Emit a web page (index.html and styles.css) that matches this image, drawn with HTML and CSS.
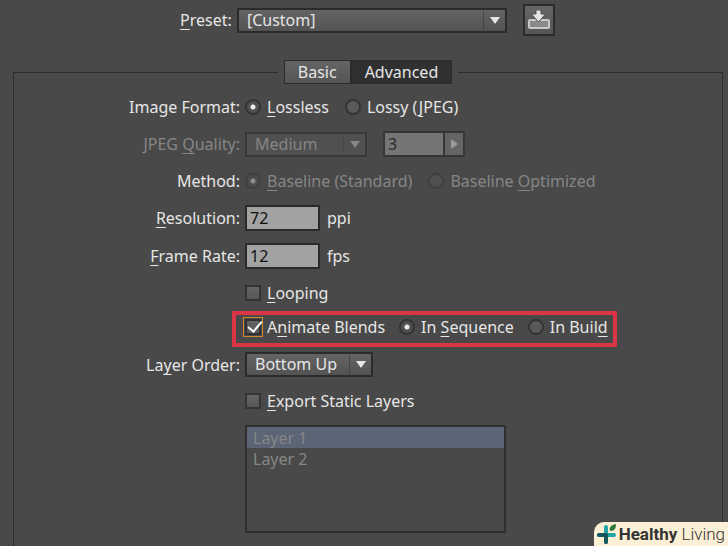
FILE: index.html
```
<!DOCTYPE html>
<html lang="en">
<head>
<meta charset="UTF-8">
<meta name="viewport" content="width=device-width, initial-scale=1.0">
<title>SWF Options</title>
<link rel="stylesheet" href="styles.css">
</head>
<body>
    <div class="preset">
        <label for="preset"><u>P</u>reset:</label>
        <div class="dropdown preset-dropdown">
            <select id="preset"><option>[Custom]</option></select>
        </div>
        <button class="save-button" type="button" aria-label="Save preset">
            <svg width="22" height="20" viewBox="0 0 22 20">
                <rect x="1" y="10" width="20" height="8" rx="1" fill="#8b8b8b" stroke="#c8c8c8" stroke-width="2"/>
                <path d="M8 0h5v4h4.500L10.500 12 3.500 4H8z" fill="#e4e4e4" stroke="#4c4c4c" stroke-width="1"/>
            </svg>
        </button>
    </div>

    <fieldset class="panel">
        <legend>
            <div class="tabs">
                <button class="tab" type="button">Basic</button>
                <button class="tab active" type="button">Advanced</button>
            </div>
        </legend>

        <form class="options">
            <span class="name">Image Format:</span>
            <div class="field">
                <label class="choice"><input type="radio" name="format" checked><span><u>L</u>ossless</span></label>
                <label class="choice"><input type="radio" name="format"><span>Lossy (<u>J</u>PEG)</span></label>
            </div>

            <label class="name off" for="quality">JPEG <u>Q</u>uality:</label>
            <div class="field">
                <div class="dropdown quality-dropdown off">
                    <select id="quality" disabled><option>Medium</option></select>
                </div>
                <div class="stepper">
                    <input type="text" value="3" aria-label="Quality value" disabled>
                    <button type="button" aria-label="Show slider" disabled></button>
                </div>
            </div>

            <span class="name">Method:</span>
            <div class="field">
                <label class="choice off"><input type="radio" name="method" checked disabled><span><u>B</u>aseline (Standard)</span></label>
                <label class="choice off"><input type="radio" name="method" disabled><span>Baseline <u>O</u>ptimized</span></label>
            </div>

            <label class="name" for="resolution"><u>R</u>esolution:</label>
            <div class="field unit">
                <input type="text" id="resolution" value="72">
                <span>ppi</span>
            </div>

            <label class="name" for="rate"><u>F</u>rame Rate:</label>
            <div class="field unit">
                <input type="text" id="rate" value="12">
                <span>fps</span>
            </div>

            <div class="field">
                <label class="choice"><input type="checkbox"><span><u>L</u>ooping</span></label>
            </div>

            <div class="field highlight">
                <label class="choice"><input type="checkbox" class="focused" checked><span>A<u>n</u>imate Blends</span></label>
                <label class="choice"><input type="radio" name="blend" checked><span>In <u>S</u>equence</span></label>
                <label class="choice"><input type="radio" name="blend"><span>In Buil<u>d</u></span></label>
            </div>

            <label class="name" for="order">La<u>y</u>er Order:</label>
            <div class="field">
                <div class="dropdown order-dropdown">
                    <select id="order"><option>Bottom Up</option></select>
                </div>
            </div>

            <div class="field">
                <label class="choice"><input type="checkbox"><span><u>E</u>xport Static Layers</span></label>
            </div>

            <select class="layers" size="5" aria-label="Layers" disabled>
                <option selected>Layer 1</option>
                <option>Layer 2</option>
            </select>
        </form>
    </fieldset>

    <div class="brand">
        <svg width="20" height="20" viewBox="0 0 20 20">
            <path d="M9 3v15M2 11h15" stroke="#24a3a8" stroke-width="4" stroke-linecap="round"/>
            <path d="M9 11v7M2 11h7" stroke="#17565c" stroke-width="4" stroke-linecap="round"/>
            <path d="M13 7c-1-4 1-6 6-7 0 4-1 7-6 7z" fill="#2c7a37"/>
        </svg>
        <span><b>Healthy</b> Living</span>
    </div>
</body>
</html>
```

FILE: styles.css
```
* {
    box-sizing: border-box;
}

body {
    margin: 0;
    height: 100vh;
    display: flex;
    flex-direction: column;
    overflow: hidden;
    background-color: #494949;
    color: #e6e6e6;
    font-family: "Noto Sans", sans-serif;
    font-size: 16px;
    line-height: 24px;
}

button, input, select {
    margin: 0;
    padding: 0;
    font: inherit;
    color: inherit;
    border: 1px solid #2b2b2b;
    border-radius: 0;
    appearance: none;
}

u {
    text-decoration-thickness: 1px;
    text-underline-offset: 3px;
    text-decoration-skip-ink: none;
}

.preset {
    display: flex;
    justify-content: center;
    align-items: center;
    gap: 5px;
    padding: 4px 0 0 7px;
}

.save-button {
    display: flex;
    justify-content: center;
    align-items: center;
    width: 32px;
    height: 32px;
    margin-left: 11px;
    border-width: 2px;
    background: linear-gradient(#666, #555);
}

/* dropdowns */
.dropdown {
    position: relative;
}

.dropdown select {
    display: block;
    width: 100%;
    height: 25px;
    padding: 0 28px 2px 8px;
    border-width: 2px;
    line-height: 20px;
    background: linear-gradient(#646464, #535353);
    opacity: 1;
}

.dropdown::before {
    content: "";
    position: absolute;
    top: 3px;
    bottom: 3px;
    right: 23px;
    border-left: 1px solid #454545;
}

.dropdown::after {
    content: "";
    position: absolute;
    top: 9px;
    right: 7px;
    border: 5px solid transparent;
    border-top: 7px solid #e6e6e6;
    border-bottom: 0;
}

.preset-dropdown {
    width: 270px;
}

.quality-dropdown {
    width: 122px;
}

.order-dropdown {
    width: 128px;
}

.off {
    color: #868686;
}

.dropdown.off select {
    background: #505050;
    border-color: #383838;
}

.dropdown.off::after {
    border-top-color: #868686;
}

/* panel */
.panel {
    flex: 1;
    min-width: 0;
    margin: 24px 5px 0 13px;
    padding: 0;
    border: 1px solid #2e2e2e;
    border-bottom: 0;
}

.panel legend {
    margin: 0 auto;
    padding: 0 6px;
}

.tabs {
    display: flex;
}

.tab {
    height: 24px;
    padding: 0 13px;
    line-height: 20px;
    background: linear-gradient(#646464, #555);
}

.tab.active {
    background: #303030;
}

.options {
    display: grid;
    grid-template-columns: 226px 1fr;
    gap: 12px 5px;
    padding-top: 11px;
}

.name {
    align-self: center;
    text-align: right;
}

.field {
    grid-column: 2;
    display: flex;
    align-items: center;
    gap: 16px;
}

.unit {
    gap: 7px;
}

.choice {
    display: flex;
    align-items: center;
    gap: 6px;
}

input[type="text"] {
    width: 75px;
    height: 26px;
    padding: 0 3px;
    border-width: 2px;
    background-color: #a2a2a2;
    color: #111;
}

input[type="radio"],
input[type="checkbox"] {
    flex: none;
    width: 16px;
    height: 16px;
    border: 2px solid #343434;
    background: linear-gradient(#646464, #585858);
}

input[type="radio"] {
    border-radius: 50%;
    background: #5a5a5a;
}

input[type="radio"]:checked {
    background: radial-gradient(circle, #eee 2px, #505050 3px);
}

input[type="radio"]:disabled {
    border-color: #404040;
    background: #505050;
}

input[type="radio"]:disabled:checked {
    background: radial-gradient(circle, #8c8c8c 2px, #4c4c4c 3px);
}

input[type="checkbox"].focused {
    position: relative;
    outline: 1px solid #d08a2c;
    outline-offset: 1px;
    border-color: #303030;
}

.focused:checked::after {
    content: "";
    position: absolute;
    left: 4px;
    top: -3px;
    width: 6px;
    height: 12px;
    border: solid #fff;
    border-width: 0 2px 2px 0;
    transform: rotate(40deg);
}

.stepper {
    display: flex;
}

.stepper input[type="text"] {
    width: 62px;
    border-color: #363636;
    background-color: #757575;
    color: #2b2b2b;
}

.stepper button {
    display: flex;
    justify-content: center;
    align-items: center;
    width: 20px;
    border: 2px solid #363636;
    border-left: 0;
    background: #646464;
}

.stepper button::before {
    content: "";
    border: 5px solid transparent;
    border-left: 7px solid #999;
    border-right: 0;
}

.highlight {
    justify-self: start;
    gap: 14px;
    margin: -6px 0 -7px -13px;
    padding: 0 5px 4px 9px;
    border: 4px solid #dc3545;
    border-radius: 1px;
}

.layers {
    grid-column: 2;
    width: 261px;
    height: 108px;
    border: 2px solid #303030;
    background: #494949;
    color: #868686;
    opacity: 1;
    overflow: hidden;
}

.layers option {
    height: 21px;
    min-height: 21px;
    padding: 0 6px;
    line-height: 20px;
    color: #868686;
}

.layers option:checked {
    background: #5b6575 linear-gradient(#5b6575, #5b6575);
}

.brand {
    position: absolute;
    right: 0;
    bottom: 0;
    display: flex;
    align-items: center;
    gap: 2px;
    height: 24px;
    padding: 0 3px;
    border-top-left-radius: 10px;
    background: #fbefd5;
    color: #333;
    font-family: Roboto, sans-serif;
    font-size: 17px;
    font-weight: 300;
}

.brand b {
    font-weight: 700;
}
```
